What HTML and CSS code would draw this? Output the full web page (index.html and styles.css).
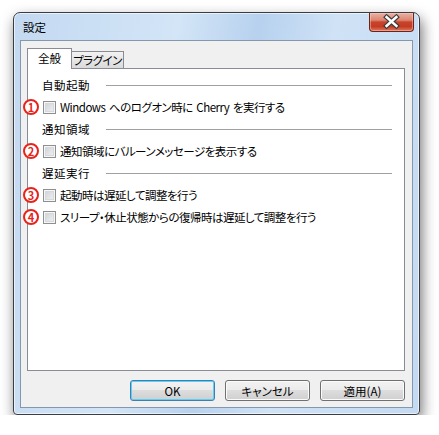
FILE: index.html
```html
<!DOCTYPE html>
<html lang="ja">
<head>
    <meta charset="UTF-8">
    <meta name="viewport" content="width=device-width, initial-scale=1.0">
    <title>設定</title>
    <link rel="stylesheet" href="styles.css">
</head>
<body>
    <div class="window">
        <div class="titlebar">
            <span class="title">設定</span>
            <button class="close">
                <svg width="45" height="19" viewBox="0 0 45 19">
                    <path d="M18 5 L28 14 M28 5 L18 14" stroke="#3b3b3b" stroke-width="5" stroke-linecap="square" fill="none"/>
                    <path d="M18 5 L28 14 M28 5 L18 14" stroke="#ffffff" stroke-width="2.6" stroke-linecap="square" fill="none"/>
                </svg>
            </button>
        </div>
        <div class="client">
            <div class="tabs">
                <div class="tab active">全般</div>
                <div class="tab">プラグイン</div>
            </div>
            <div class="panel">
                <div class="group"><span>自動起動</span><span class="rule"></span></div>
                <label class="row"><span class="mark">1</span><span class="check"></span>Windows へのログオン時に Cherry を実行する</label>
                <div class="group"><span>通知領域</span><span class="rule"></span></div>
                <label class="row"><span class="mark">2</span><span class="check"></span>通知領域にバルーンメッセージを表示する</label>
                <div class="group"><span>遅延実行</span><span class="rule"></span></div>
                <label class="row"><span class="mark">3</span><span class="check"></span>起動時は遅延して調整を行う</label>
                <label class="row"><span class="mark">4</span><span class="check"></span>スリープ・休止状態からの復帰時は遅延して調整を行う</label>
            </div>
            <div class="buttons">
                <button class="btn default">OK</button>
                <button class="btn">キャンセル</button>
                <button class="btn">適用(A)</button>
            </div>
        </div>
    </div>
</body>
</html>
```

FILE: styles.css
```css
body {
    margin: 0;
    background: #ffffff;
    font-family: "Noto Sans CJK JP", "Liberation Sans", sans-serif;
    font-size: 11.5px;
    letter-spacing: -0.5px;
    word-spacing: 1.5px;
    font-feature-settings: "palt";
    color: #000000;
}
.window {
    box-sizing: border-box;
    width: 407px;
    height: 403px;
    margin: 12px 0 0 13px;
    display: flex;
    flex-direction: column;
    padding: 0 6px 6px 6px;
    border: 1px solid #3a3d42;
    border-radius: 7px 7px 4px 4px;
    background: linear-gradient(100deg, #c3d9f1 0%, #d3e5f7 35%, #b7d1ee 52%, #cfe2f6 68%, #c4daf2 100%);
    box-shadow: 2px 6px 14px rgba(0, 0, 0, 0.55), inset 0 0 0 1px rgba(255, 255, 255, 0.6);
}
.titlebar {
    height: 27px;
    display: flex;
    justify-content: space-between;
    align-items: flex-start;
    flex-shrink: 0;
}
.title {
    margin: 6px 0 0 3px;
    line-height: 16px;
    letter-spacing: 0;
}
.close {
    width: 45px;
    height: 19px;
    margin: 0 -1px 0 0;
    padding: 0;
    border: 1px solid #6a2419;
    border-top: none;
    border-radius: 0 0 4px 4px;
    background: linear-gradient(#eab0a3 0%, #dc8571 40%, #c9432a 50%, #c33b22 75%, #dc7a62 100%);
    box-shadow: inset 0 0 0 1px rgba(255, 210, 200, 0.45);
    display: flex;
}
.close svg {
    display: block;
    margin: -1px 0 0 -1px;
}
.client {
    flex: 1;
    display: flex;
    flex-direction: column;
    padding: 7px 7px 6px 6px;
    border: 1px solid #8497ad;
    background: #f0f0f0;
}
.tabs {
    display: flex;
    align-items: flex-end;
    height: 21px;
    margin-bottom: -1px;
    position: relative;
    z-index: 1;
}
.tab {
    box-sizing: border-box;
    height: 17px;
    width: 52px;
    margin-bottom: 1px;
    border: 1px solid #898c95;
    border-bottom: none;
    border-left: none;
    background: linear-gradient(#f2f2f2, #dadada);
    text-align: center;
    line-height: 16px;
    white-space: nowrap;
}
.tab.active {
    width: 45px;
    height: 21px;
    margin-bottom: 0;
    border-left: 1px solid #898c95;
    background: #ffffff;
    line-height: 18px;
    letter-spacing: 0;
}
.panel {
    flex: 1;
    border: 1px solid #898c95;
    background: #ffffff;
    padding-top: 5px;
}
.group {
    display: grid;
    grid-template-columns: 64px 1fr;
    align-items: center;
    height: 22px;
    padding: 0 12px 0 14px;
    letter-spacing: 0.5px;
}
.rule {
    height: 1px;
    background: #a0a0a0;
}
.row {
    position: relative;
    display: flex;
    align-items: center;
    height: 22px;
    padding-left: 15px;
    white-space: nowrap;
}
.check {
    box-sizing: border-box;
    width: 13px;
    height: 13px;
    margin-right: 4px;
    border: 1px solid #8e8f8f;
    background: linear-gradient(135deg, #cbcfd4, #f4f4f4);
    box-shadow: inset 0 0 0 1px #f6f6f6, inset 0 0 0 2px #d6d8db;
}
.mark {
    position: absolute;
    left: -5px;
    top: 3px;
    box-sizing: border-box;
    width: 16px;
    height: 16px;
    border: 2px solid #e8231b;
    border-radius: 50%;
    background: #ffffff;
    color: #e8231b;
    font-weight: bold;
    font-size: 11px;
    letter-spacing: 0;
    line-height: 12px;
    text-align: center;
}
.buttons {
    display: flex;
    justify-content: flex-end;
    gap: 10px;
    margin-top: 9px;
}
.btn {
    width: 85px;
    height: 21px;
    padding: 0;
    border: 1px solid #707070;
    border-radius: 3px;
    background: linear-gradient(#f2f2f2 0%, #ebebeb 50%, #dddddd 50%, #cfcfcf 100%);
    box-shadow: inset 0 0 0 1px #fbfbfb;
    font: inherit;
    letter-spacing: 0;
    color: #000000;
}
.btn.default {
    border-color: #3c7fb1;
    box-shadow: inset 0 0 0 1px #5fd0f5;
}
```
